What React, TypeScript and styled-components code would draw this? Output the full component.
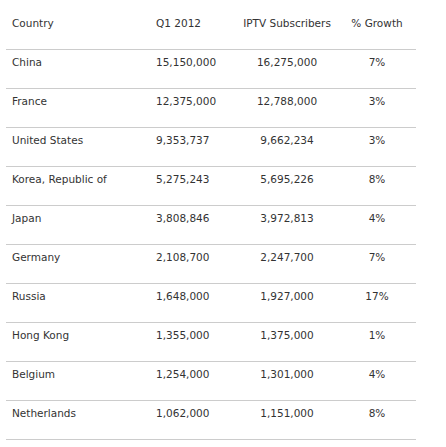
import React from "react";
import styled, { createGlobalStyle } from "styled-components";

const GlobalStyle = createGlobalStyle`
  * {
    box-sizing: border-box;
  }
  body {
    margin: 0;
    background: #ffffff;
    font-family: "DejaVu Sans", Verdana, sans-serif;
  }
`;

type TAlign = {
  align?: "left" | "center";
};

const Wrapper = styled.div`
  padding: 11px 0 0 6px;
`;

const Table = styled.table`
  border-collapse: collapse;
  width: 410px;
  table-layout: fixed;
  color: #333333;
  font-size: 10.5px;
`;

const Th = styled.th<TAlign>`
  font-weight: normal;
  text-align: ${props => props.align || "left"};
  padding: 6px 6px 19px;
  line-height: 13px;
  border-bottom: 1px solid #cccccc;
  white-space: nowrap;
`;

const Td = styled.td<TAlign>`
  text-align: ${props => props.align || "left"};
  padding: 6px 6px 19px;
  line-height: 13px;
  border-bottom: 1px solid #cccccc;
  white-space: nowrap;
`;

const rows = [
  ["China", "15,150,000", "16,275,000", "7%"],
  ["France", "12,375,000", "12,788,000", "3%"],
  ["United States", "9,353,737", "9,662,234", "3%"],
  ["Korea, Republic of", "5,275,243", "5,695,226", "8%"],
  ["Japan", "3,808,846", "3,972,813", "4%"],
  ["Germany", "2,108,700", "2,247,700", "7%"],
  ["Russia", "1,648,000", "1,927,000", "17%"],
  ["Hong Kong", "1,355,000", "1,375,000", "1%"],
  ["Belgium", "1,254,000", "1,301,000", "4%"],
  ["Netherlands", "1,062,000", "1,151,000", "8%"],
];

export default function App() {
  return (
    <>
      <GlobalStyle />
      <Wrapper>
        <Table>
          <colgroup>
            <col style={{ width: 144 }} />
            <col style={{ width: 86 }} />
            <col style={{ width: 102 }} />
            <col style={{ width: 78 }} />
          </colgroup>
          <thead>
            <tr>
              <Th>Country</Th>
              <Th>Q1 2012</Th>
              <Th align="center">IPTV Subscribers</Th>
              <Th align="center">% Growth</Th>
            </tr>
          </thead>
          <tbody>
            {rows.map(r => (
              <tr key={r[0]}>
                <Td>{r[0]}</Td>
                <Td>{r[1]}</Td>
                <Td align="center">{r[2]}</Td>
                <Td align="center">{r[3]}</Td>
              </tr>
            ))}
          </tbody>
        </Table>
      </Wrapper>
    </>
  );
}
